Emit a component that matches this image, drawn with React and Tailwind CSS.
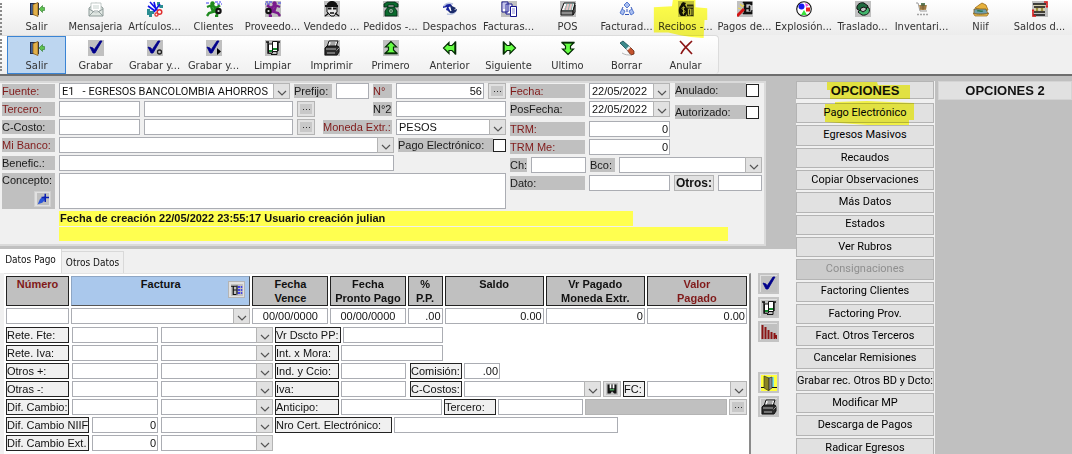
import { useState } from "react";
import clsx from "clsx";

/* ---------- icons ---------- */

const Svg = ({ gray, children, size = "size-4" }) => (
  <svg viewBox="0 0 16 16" className={clsx(size, "shrink-0")} fill="none" aria-hidden="true">
    {gray && <rect width="16" height="16" fill="#c0c0c0" />}
    {children}
  </svg>
);

const ExitIcon = () => (
  <Svg>
    <path d="M1 2h9v12H1z" fill="#1f2a4d" />
    <path d="M2 3h2v10H2z" fill="#3f5f96" />
    <path d="M4 3.500l5-2v14l-5-2z" fill="#e2b04a" stroke="#7a5512" strokeWidth=".7" />
    <path d="M15.500 6.500h-2V4.500L10 8l3.500 3.500v-2h2z" fill="#5fc24f" stroke="#2c7a2a" strokeWidth=".6" />
  </Svg>
);

const MailIcon = () => (
  <Svg>
    <path d="M1 7l7-5 7 5v8H1z" fill="#dfe6e2" stroke="#8d9a98" />
    <path d="M3 2h10v7l-5 3-5-3z" fill="#fff" stroke="#a9b4b2" strokeWidth=".7" />
    <path d="M5 5h6M5 7h6" stroke="#b9c6c2" strokeWidth=".8" />
    <path d="M1 15l5-5h4l5 5M1 8l5 3M15 8l-5 3" stroke="#8d9a98" strokeWidth=".9" />
  </Svg>
);

const ToolsIcon = () => (
  <Svg>
    <path d="M0 8h3v2h4v3H5v3H2v-2H0zM10 1h3v3h3v3h-3l-3-3z" fill="#2b8d92" />
    <path d="M3 1l8 9M7 1l2 8M1 5l7 5M13 3l-6 8" stroke="#1010e8" strokeWidth="1.600" />
    <circle cx="12.500" cy="11" r="2.300" stroke="#e03030" strokeWidth="1.500" />
    <circle cx="9.500" cy="13.500" r="1.600" stroke="#e03030" strokeWidth="1.300" />
  </Svg>
);

const RunnerIcon = ({ color, flip }) => (
  <Svg gray={flip}>
    <g transform={flip ? "translate(16 0) scale(-1 1)" : undefined}>
      <path d="M0 2h4M9 1h6M11 3h5" stroke="#3b3bf0" strokeWidth="1" strokeDasharray="3 1" />
      <circle cx="6.500" cy="2.500" r="2.200" fill={color} />
      <path d="M1 6l5-2 4 3 3-2-1-1M5 5l2 6-4 1-2 3M7 9l4 3v3H9M8 5l1 5" stroke={color} strokeWidth="2.400" />
      <circle cx="12.500" cy="10" r="3.200" fill="#111" />
      <circle cx="12.500" cy="10" r="1.100" fill="#ddd" />
    </g>
  </Svg>
);

const SellerIcon = () => (
  <Svg gray>
    <path d="M3 5c0-6 10-6 10 0v6l-3 4H7l-4-4z" fill="#e8e8e8" stroke="#111" />
    <path d="M3 4c1-5 9-5 10 0z" fill="#111" />
    <path d="M1 5h13M4 7.500h3.500M9 7.500h3.500" stroke="#111" strokeWidth="2" />
    <path d="M6 12h4M1 15l4-3M15 15l-4-3" stroke="#111" strokeWidth="1.300" />
  </Svg>
);

const PhoneIcon = () => (
  <Svg gray>
    <path d="M1 6V3l3-2h8l3 2v3h-4V4H5v2z" fill="#0a6b2d" stroke="#021" strokeWidth=".8" />
    <path d="M5 6h6l3 4v5H2v-5z" fill="#0a6b2d" stroke="#021" strokeWidth=".8" />
    <circle cx="8" cy="10" r="2.400" fill="#9fd0ac" stroke="#021" strokeWidth=".8" />
    <circle cx="8" cy="10" r=".8" fill="#021" />
  </Svg>
);

const ShipIcon = () => (
  <Svg>
    <path d="M1 7c0-3 4-5 8-4l1 2-3 1 2 5-5-2 1-3z" fill="#16219e" />
    <path d="M2 5c2-3 6-3 9-2M14 10c-2 3-6 4-9 3" stroke="#b9c3e0" strokeWidth="1.400" />
    <path d="M15 8c0 3-4 5-7 4l-2-2 3-1-1-5 6 3-2 2z" fill="#1b2b6b" />
    <path d="M7 6l2 4" stroke="#fff" strokeWidth="1.200" />
  </Svg>
);

const InvoicesIcon = () => (
  <Svg gray>
    <path d="M1 1h6v10H1zM5 3h6v10H5z" fill="#fff" stroke="#14148c" />
    <path d="M9.500 5.500h6v10h-6z" fill="#fff" stroke="#14148c" />
    <path d="M2 3h3M2 5h3M2 7h3M6 5h3M6 7h3M6 9h3M11 8h3M11 10h3M11 12h3" stroke="#6d6dc9" strokeWidth=".8" />
  </Svg>
);

const PosIcon = () => (
  <Svg gray>
    <path d="M4 2h11l-2 8H1z" fill="#f7f7f7" stroke="#111" />
    <path d="M6 4h7M5 6h7M4 8h8" stroke="#e08f8f" />
    <path d="M7 2l-2 8M10 2L8 10M13 2l-2 8" stroke="#4aa6a0" strokeWidth=".6" />
    <path d="M1 10h12v4H1zM13 10l2-6v7l-2 3z" fill="#8c8c8c" stroke="#111" strokeWidth=".9" />
  </Svg>
);

const EInvoiceIcon = () => (
  <Svg>
    <path d="M8 1l3 3-3 3-3-3zM3 8l3 2-2 4-3-2zM13 8l2 4-3 2-2-4z" fill="#a9bff0" stroke="#4a6ecb" strokeWidth=".9" />
    <path d="M6 13.500h4M8 8v3M4 6l-1 2M12 6l1 2" stroke="#3455b8" />
  </Svg>
);

const MoneyIcon = () => (
  <Svg gray>
    <path d="M3 3l2-2 3 1-1 2c3 2 3 10 0 11H3C0 13 0 6 3 4z" fill="#111" />
    <path d="M7 7c-1-1-3-1-3 .500S7 9 7 10.500 5 12.500 4 11.500M5.500 5.500v8" stroke="#c0c0c0" strokeWidth=".9" />
    <path d="M9 3.500h6.500V15H9z" fill="#2c2c2c" />
    <path d="M9 6h6M10.500 8h2v6h-2zM14 8v6M9 2h6" stroke="#c0c0c0" strokeWidth=".9" />
  </Svg>
);

const PaymentsIcon = () => (
  <Svg gray>
    <path d="M6 1h9v3h-1l-1-1H9v4h3V5h1v5h-1V8H9v3h5l1-2v4H6v-1h1V2H6z" fill="#111" stroke="#111" strokeWidth=".6" />
    <path d="M0 15l7-7" stroke="#d41414" strokeWidth="3" />
    <path d="M3 3l2 2M7 4l-2 2M1 7l3 1" stroke="#e9d64d" strokeWidth="1.200" />
  </Svg>
);

const ExplosionIcon = () => (
  <Svg>
    <circle cx="8" cy="8" r="7.300" fill="#fff" stroke="#111" strokeWidth="1.100" />
    <circle cx="5.500" cy="5.500" r="3" fill="#1919f0" />
    <path d="M10 6.500h4v4h-4z" fill="#ee2222" />
    <path d="M8 9l3 5H5z" fill="#3ae23a" />
    <path d="M9 2l4 2-3 2z" fill="#ef4fe4" />
  </Svg>
);

const TransferIcon = () => (
  <Svg gray>
    <path d="M2 8C1 3 6 1 9 2l4 3-1 3-3-2-3 1-1 3z" fill="#1f6a3f" stroke="#111" />
    <path d="M14 7c2 5-3 8-7 7L3 11l2-2 3 2 3-2 1-3z" fill="#43b56d" stroke="#111" />
  </Svg>
);

const CartIcon = () => (
  <Svg>
    <path d="M2 2h2l2 8h7" stroke="#9b9b9b" />
    <path d="M5 4h8l-1 5H6z" fill="#b7925a" />
    <path d="M7 2h4v3H7z" fill="#5b7f5d" />
    <path d="M6 5h6M6 7h6M9 3v6" stroke="#6b4d22" strokeWidth=".7" />
    <path d="M3 13.500h11" stroke="#a4a4a4" strokeWidth="1.500" strokeDasharray="2 1" />
  </Svg>
);

const NiifIcon = () => (
  <Svg>
    <path d="M2 7l4-3 3-2 4 2 2 5-3 1z" fill="#e6b13c" stroke="#9b6a14" strokeWidth=".8" />
    <path d="M1 8h12l2 5H1z" fill="#6f9fae" stroke="#7c5a1b" strokeWidth=".8" />
    <path d="M0 12c4 2 10 2 16 0l-2 3H2z" fill="#efc454" stroke="#8c6318" strokeWidth=".7" />
    <path d="M4 10c2-1 4 1 6 0" stroke="#2d7a4e" strokeWidth="1.300" />
  </Svg>
);

const BalanceIcon = () => (
  <Svg gray>
    <path d="M2 3h11v9H2z" fill="#d8d2ae" />
    <path d="M1 3h13M2 6h11M2 11h11M1 14h12" stroke="#111" strokeWidth="1.300" />
    <path d="M4 7l2 3M6 7l-2 3M9 7l2 3M11 7L9 10" stroke="#8e8128" />
    <path d="M12 1h3v5M14 5l1 1 1-1M4 15H1V9M0 10l1-1 1 1" stroke="#dd1a1a" strokeWidth="1.500" />
  </Svg>
);

const Check = () => <path d="M2 7l3 1 1 2L12 1h2L7 13H5z" fill="#00008b" stroke="#00008b" strokeWidth=".8" />;

const SaveIcon = () => (
  <Svg gray>
    <Check />
  </Svg>
);

const SaveNewIcon = () => (
  <Svg gray>
    <g transform="translate(-1 0)">
      <Check />
    </g>
    <circle cx="12.500" cy="12" r="2" stroke="#222" strokeWidth="1.300" />
  </Svg>
);

const SaveNextIcon = () => (
  <Svg gray>
    <g transform="translate(-1 0)">
      <Check />
    </g>
    <path d="M11 8l4 3.500-4 3.500z" fill="#000" />
  </Svg>
);

const CleanIcon = () => (
  <Svg gray>
    <path d="M1 2h3M12 2h3M3 2v11h4M13 2v9" stroke="#111" strokeWidth="1.400" />
    <path d="M3.500 4h4v9h-4z" fill="#fff" stroke="#111" />
    <path d="M7.500 1.500h5v10h-5z" fill="#fff" stroke="#111" />
    <path d="M8 8h4v2H8zM4 10h3v2H4z" fill="#158a2e" />
    <path d="M6 14.500h6v-3" stroke="#111" />
  </Svg>
);

const PrintIcon = () => (
  <Svg gray>
    <path d="M5 1h9l-2 6H3z" fill="#f3f3f3" stroke="#111" />
    <path d="M6.500 3h5M6 5h5" stroke="#555" />
    <path d="M1 8l2-2h11l1 2v4l-2 3H1z" fill="#2c2c2c" stroke="#111" />
    <path d="M2 9h10M3 13h8" stroke="#b8b8b8" strokeWidth="1.200" />
    <path d="M12.500 10.500L15 8" stroke="#999" />
  </Svg>
);

// arrow with a flared tail and a bar; drawn pointing up and turned for the other directions
const MoveIcon = ({ turn = 0, gray }) => (
  <Svg gray={gray}>
    <g transform={`rotate(${turn} 8 8)`}>
      <path d="M8 1.500L2.500 7H5.500v3L2.500 13h11L10.500 10V7h3z" fill="#66ff44" stroke="#052d05" strokeWidth="1.200" />
      <path d="M1.500 13.500h13" stroke="#052d05" strokeWidth="1.600" />
    </g>
  </Svg>
);

const EraseIcon = () => (
  <Svg>
    <path d="M1 3l3-2 7 6-3 3z" fill="#3c8a8c" stroke="#174a50" strokeWidth=".8" />
    <path d="M8 10l3-3 4 4v3l-3 1z" fill="#c4532e" stroke="#5f2410" strokeWidth=".8" />
    <path d="M7 9l3-3 1.500 1.500-3 3z" fill="#ececec" />
    <path d="M3 13c3 2 6 2 9 2" stroke="#b5b5b5" />
  </Svg>
);

const VoidIcon = () => (
  <Svg>
    <path d="M2 1l12 13M14 1C10 5 5 9 3 14" stroke="#8b1414" strokeWidth="1.700" />
  </Svg>
);

const PinIcon = () => (
  <Svg gray size="size-3">
    <path d="M1 15l3-7 6-4 2 4-5 5z" fill="#2b55d8" />
    <path d="M11 1v11M6 6h10" stroke="#0a1fb0" strokeWidth="2" />
  </Svg>
);

const TreeIcon = () => (
  <Svg gray size="size-3">
    <path d="M0 3h7M3 3v11h4M3 8h4M8 2v12" stroke="#111" strokeWidth="1.600" />
    <path d="M9 4h6M9 8h6M9 12h6" stroke="#1a1af0" strokeWidth="2" strokeDasharray="3 1" />
  </Svg>
);

const DiskIcon = () => (
  <Svg gray size="size-3">
    <path d="M2 2h3v5h2V2h2v5h2V2h3v12h-3l-3-3-2 3H2z" fill="#111" />
    <path d="M5 8h6v2H5z" fill="#4aa35a" />
    <path d="M5 2h2v5H5zM9 2h2v5H9z" fill="#fff" />
  </Svg>
);

const BarsIcon = () => (
  <Svg gray>
    <path d="M1.500 1v14M4.500 3v12M7.500 6v9M10.500 8v7M13.500 9v6M15.500 11v4" stroke="#8b1414" strokeWidth="2" />
  </Svg>
);

const DoorIcon = () => (
  <Svg>
    <rect width="16" height="16" fill="#ffff3c" />
    <path d="M5 2h8v10H5z" fill="#7fe0e0" />
    <path d="M3 1l5 2v13l-5-3z" fill="#8a8420" stroke="#222" strokeWidth=".6" />
    <path d="M8 3l3-1v11l-3 2z" fill="#8a8a8a" stroke="#222" strokeWidth=".6" />
    <path d="M0 12.500h3M11 12.500h5" stroke="#111" />
  </Svg>
);

/* ---------- data ---------- */

const modules = [
  { label: "Salir", icon: <ExitIcon /> },
  { label: "Mensajeria", icon: <MailIcon /> },
  { label: "Artículos...", icon: <ToolsIcon /> },
  { label: "Clientes", icon: <RunnerIcon color="#1f8a1f" /> },
  { label: "Proveedo...", icon: <RunnerIcon color="#7a1a8c" flip /> },
  { label: "Vendedo ...", icon: <SellerIcon /> },
  { label: "Pedidos -...", icon: <PhoneIcon /> },
  { label: "Despachos", icon: <ShipIcon /> },
  { label: "Facturas...", icon: <InvoicesIcon /> },
  { label: "POS", icon: <PosIcon /> },
  { label: "Facturad...", icon: <EInvoiceIcon /> },
  { label: "Recibos -...", icon: <MoneyIcon />, marked: true },
  { label: "Pagos de...", icon: <PaymentsIcon /> },
  { label: "Explosión...", icon: <ExplosionIcon /> },
  { label: "Traslado...", icon: <TransferIcon /> },
  { label: "Inventari...", icon: <CartIcon /> },
  { label: "Niif", icon: <NiifIcon /> },
  { label: "Saldos d...", icon: <BalanceIcon /> },
];

const actions = [
  { label: "Salir", icon: <ExitIcon />, selected: true },
  { label: "Grabar", icon: <SaveIcon /> },
  { label: "Grabar y...", icon: <SaveNewIcon /> },
  { label: "Grabar y...", icon: <SaveNextIcon /> },
  { label: "Limpiar", icon: <CleanIcon /> },
  { label: "Imprimir", icon: <PrintIcon /> },
  { label: "Primero", icon: <MoveIcon gray /> },
  { label: "Anterior", icon: <MoveIcon turn={270} /> },
  { label: "Siguiente", icon: <MoveIcon turn={90} /> },
  { label: "Ultimo", icon: <MoveIcon turn={180} /> },
  { label: "Borrar", icon: <EraseIcon /> },
  { label: "Anular", icon: <VoidIcon /> },
];

const options = [
  { label: "Pago Electrónico", marked: true },
  { label: "Egresos Masivos" },
  { label: "Recaudos" },
  { label: "Copiar Observaciones" },
  { label: "Más Datos" },
  { label: "Estados" },
  { label: "Ver Rubros" },
  { label: "Consignaciones", disabled: true },
  { label: "Factoring Clientes" },
  { label: "Factoring Prov." },
  { label: "Fact. Otros Terceros" },
  { label: "Cancelar Remisiones" },
  { label: "Grabar rec. Otros BD y Dcto:" },
  { label: "Modificar MP" },
  { label: "Descarga de Pagos" },
  { label: "Radicar Egresos" },
];

const columns = [
  { label: "Número", width: "w-[63px]", red: true },
  { label: "Factura", width: "w-[179px]", blue: true },
  { label: "Fecha\nVence", width: "w-[76px]", value: "00/00/0000", align: "text-center" },
  { label: "Fecha\nPronto Pago", width: "w-[75px]", value: "00/00/0000", align: "text-center" },
  { label: "%\nP.P.", width: "w-[35px]", value: ".00", align: "text-right" },
  { label: "Saldo", width: "w-[99px]", value: "0.00", align: "text-right" },
  { label: "Vr Pagado\nMoneda Extr.", width: "w-[99px]", value: "0", align: "text-right" },
  { label: "Valor\nPagado", width: "w-[100px]", value: "0.00", align: "text-right", red: true },
];

/* ---------- controls ---------- */

const Label = ({ htmlFor, red, className, children }) => (
  <label
    htmlFor={htmlFor}
    className={clsx("h-[14px] shrink-0 bg-[#c0c0c0] leading-[14px] whitespace-nowrap", red ? "text-[#801a1a]" : "text-[#1a1a1a]", className)}
  >
    {children}
  </label>
);

const BoxLabel = ({ htmlFor, className, children }) => (
  <label
    htmlFor={htmlFor}
    className={clsx("h-4 shrink-0 border border-[#222] bg-[#f0f0f0] leading-[14px] whitespace-nowrap", className)}
  >
    {children}
  </label>
);

const Input = ({ className, ...props }) => (
  <input type="text" className={clsx("h-4 min-w-0 border border-[#abadb3] bg-white px-px leading-none outline-none", className)} {...props} />
);

const Select = ({ id, value, className, ...props }) => (
  <div className={clsx("relative h-4 min-w-0", className)}>
    <select id={id} className="block h-4 w-full appearance-none border border-[#abadb3] bg-white pr-4 pl-[2px] leading-none outline-none" {...props}>
      <option>{value}</option>
    </select>
    <span className="pointer-events-none absolute inset-y-0 right-0 flex w-[17px] items-center justify-center border border-[#b4b4b4] bg-[#e1e1e1]">
      <svg viewBox="0 0 10 6" className="mt-1 h-[6px] w-[10px]" fill="none">
        <path d="M1 1l4 4 4-4" stroke="#555" strokeWidth="1.200" />
      </svg>
    </span>
  </div>
);

const Dots = ({ label }) => (
  <button aria-label={label} className="flex h-4 w-[18px] shrink-0 items-center justify-center border border-[#b4b4b4] bg-[#e1e1e1]">
    <span className="flex h-[10px] w-3 items-center justify-center gap-[2px] bg-[#c8c8c8]">
      <i className="size-px bg-[#333]" />
      <i className="size-px bg-[#333]" />
      <i className="size-px bg-[#333]" />
    </span>
  </button>
);

const CheckBox = ({ id }) => (
  <input id={id} type="checkbox" className="size-[13px] shrink-0 appearance-none border border-[#222] bg-white checked:bg-[#222]" />
);

const ToolButton = ({ label, icon, selected, marked }) => (
  <button
    className={clsx(
      "relative flex h-[38px] w-[59px] shrink-0 flex-col items-center gap-[3px] whitespace-nowrap",
      selected && "border border-[#3a84d4] bg-[#bdd6f0]",
      selected ? "pt-[3px]" : "pt-1"
    )}
  >
    {icon}
    <span className="leading-[14px]">{label}</span>
    {marked && (
      <svg viewBox="0 0 60 42" className="pointer-events-none absolute top-[3px] -left-[5px] h-[38px] w-[60px] mix-blend-multiply">
        <path d="M21 0h25v8l13 1v13h-3l-1 20-14-1-12-2-13-3H0V8l20-1z" fill="#ffff4a" />
      </svg>
    )}
  </button>
);

const SideButton = ({ label, children }) => (
  <button aria-label={label} className="flex size-[21px] items-center justify-center border-2 border-[#c4c4c4] bg-[#e1e1e1]">
    {children}
  </button>
);

/* ---------- sections ---------- */

const Toolbars = () => (
  <header className="shrink-0 border-b-2 border-[#6e6e6e] bg-[#f0f0f0] font-['DejaVu_Sans_Condensed','DejaVu_Sans',sans-serif] text-[11px] text-[#333]">
    <div className="flex h-[35px] items-end bg-linear-to-b from-white to-[#ececec]">
      <div className="h-8 w-[7px] shrink-0 border-l-2 border-dotted border-[#8a8a8a]" />
      {modules.map((item) => (
        <ToolButton key={item.label} {...item} />
      ))}
    </div>
    <div className="flex h-[39px] w-[719px] items-center rounded-r border-t border-r border-[#dcdcdc] bg-linear-to-b from-white to-[#f0f0f0]">
      <div className="h-8 w-[7px] shrink-0 border-l-2 border-dotted border-[#8a8a8a]" />
      {actions.map((item, i) => (
        <ToolButton key={i} {...item} />
      ))}
    </div>
  </header>
);

const Voucher = () => (
  <form className="mt-[5px] mr-[30px] mb-[3px] border-2 border-l-0 border-[#dadada] bg-[#f0f0f0] pb-[3px] pl-[2px]" onSubmit={(e) => e.preventDefault()}>
    <div className="flex gap-1">
      <div className="flex flex-1 flex-col gap-[2px]">
        <div className="flex items-center gap-1">
          <Label htmlFor="fuente" red className="w-[53px]">Fuente:</Label>
          <Select id="fuente" value={"E1\u00a0\u00a0 - EGRESOS BANCOLOMBIA AHORROS"} className="flex-1 font-[Roboto,sans-serif]" />
          <Label htmlFor="prefijo" className="w-[38px]">Prefijo:</Label>
          <Input id="prefijo" className="w-[33px]" />
          <Label htmlFor="numero" red className="w-[19px]">N°</Label>
          <Input id="numero" className="w-[88px] text-right" defaultValue="56" />
          <Dots label="Buscar número" />
        </div>
        <div className="flex items-center gap-1">
          <Label htmlFor="tercero" red className="w-[53px]">Tercero:</Label>
          <Input id="tercero" className="w-[81px]" />
          <Input aria-label="Nombre del tercero" className="flex-1" />
          <Dots label="Buscar tercero" />
          <Label htmlFor="numero2" className="ml-[54px] w-[19px]">N°2</Label>
          <Input id="numero2" className="w-[110px]" />
        </div>
        <div className="flex items-center gap-1">
          <Label htmlFor="ccosto" className="w-[53px]">C-Costo:</Label>
          <Input id="ccosto" className="w-[81px]" />
          <Input aria-label="Nombre del centro de costo" className="flex-1" />
          <Dots label="Buscar centro de costo" />
          <Label htmlFor="moneda" red className="ml-[4px] w-[69px]">Moneda Extr.:</Label>
          <Select id="moneda" value="PESOS" className="w-[110px]" />
        </div>
        <div className="flex items-center gap-1">
          <Label htmlFor="banco" red className="w-[53px]">Mi Banco:</Label>
          <Select id="banco" value="" className="flex-1" />
          <div className="flex items-center">
            <Label htmlFor="pago" className="w-[95px]">Pago Electrónico:</Label>
            <CheckBox id="pago" />
          </div>
        </div>
        <div className="flex items-center gap-1">
          <Label htmlFor="benefic" className="w-[53px]">Benefic.:</Label>
          <Input id="benefic" className="mr-[112px] flex-1" />
        </div>
        <div className="flex gap-1">
          <div className="flex w-[53px] shrink-0 flex-col bg-[#c0c0c0]">
            <Label htmlFor="concepto">Concepto:</Label>
            <button aria-label="Fijar concepto" className="mt-1 mr-1 flex h-4 w-[17px] items-center justify-center self-end border border-[#d0d0d0] bg-[#e1e1e1]">
              <PinIcon />
            </button>
          </div>
          <textarea id="concepto" className="h-9 flex-1 resize-none border border-[#abadb3] bg-white outline-none" />
        </div>
      </div>

      <div className="flex w-[254px] flex-col gap-[2px] pr-[2px]">
        <div className="flex gap-[5px]">
          <div className="flex flex-col gap-[2px]">
            <div className="flex items-center gap-1">
              <Label htmlFor="fecha" red className="w-[75px]">Fecha:</Label>
              <Select id="fecha" value="22/05/2022" className="w-[81px]" />
            </div>
            <div className="flex items-center gap-1">
              <Label htmlFor="posfecha" className="w-[75px]">PosFecha:</Label>
              <Select id="posfecha" value="22/05/2022" className="w-[81px]" />
            </div>
          </div>
          <div className="flex flex-col gap-2">
            <div className="flex items-center">
              <Label htmlFor="anulado" className="w-[71px]">Anulado:</Label>
              <CheckBox id="anulado" />
            </div>
            <div className="flex items-center">
              <Label htmlFor="autorizado" className="w-[71px]">Autorizado:</Label>
              <CheckBox id="autorizado" />
            </div>
          </div>
        </div>
        <div className="flex items-center gap-1">
          <Label htmlFor="trm" red className="w-[75px]">TRM:</Label>
          <Input id="trm" className="w-[81px] text-right" defaultValue="0" />
        </div>
        <div className="flex items-center gap-1">
          <Label htmlFor="trmme" red className="w-[75px]">TRM Me:</Label>
          <Input id="trmme" className="w-[81px] text-right" defaultValue="0" />
        </div>
        <div className="flex items-center gap-1">
          <Label htmlFor="ch" className="w-[17px]">Ch:</Label>
          <Input id="ch" className="w-[55px]" />
          <Label htmlFor="bco" className="w-[25px]">Bco:</Label>
          <Select id="bco" value="" className="flex-1" />
        </div>
        <div className="flex items-center gap-1">
          <Label htmlFor="dato" className="w-[75px]">Dato:</Label>
          <Input id="dato" className="w-[81px]" />
          <button className="h-4 w-10 border border-[#b4b4b4] bg-[#e1e1e1] text-[12px] leading-[13px] font-bold">Otros:</button>
          <Input aria-label="Otros" className="flex-1" />
        </div>
      </div>
    </div>

    <div className="mt-[2px] mr-[36px] ml-[57px] flex flex-col gap-px">
      <p className="mr-[95px] h-[15px] bg-[#ffff50] pl-px leading-[15px] font-bold">
        Fecha de creación 22/05/2022 23:55:17 Usuario creación julian
      </p>
      <div className="h-[14px] bg-[#ffff50]" />
    </div>
  </form>
);

const InvoiceTable = () => (
  <table className="w-full table-fixed border-separate border-spacing-[2px]">
    <thead>
      <tr className="h-[30px]">
        {columns.map((col) => (
          <th
            key={col.label}
            className={clsx(
              "relative border p-0 align-top leading-[14px] font-bold whitespace-pre",
              col.width,
              col.blue ? "border-[#8ea6c4] border-r-[#555] border-b-[#555] bg-[#aac8ec]" : "border-[#222] bg-[#c0c0c0]",
              col.red && "text-[#801a1a]"
            )}
          >
            {col.label}
            {col.blue && (
              <button aria-label="Ver facturas" className="absolute top-1 right-1 flex size-[17px] items-center justify-center border border-[#b4b4b4] bg-[#e1e1e1]">
                <TreeIcon />
              </button>
            )}
          </th>
        ))}
      </tr>
    </thead>
    <tbody>
      <tr className="h-4">
        {columns.map((col) => (
          <td key={col.label} className="p-0">
            {col.blue ? (
              <Select aria-label={col.label} value="" />
            ) : (
              <Input aria-label={col.label} className={clsx("block w-full", col.align)} defaultValue={col.value} />
            )}
          </td>
        ))}
      </tr>
    </tbody>
  </table>
);

// label + value + account select, shared by every row of the detail grid
const Concept = ({ id, label, wide, value }) => (
  <div className="flex w-[267px] shrink-0 gap-[3px]">
    <BoxLabel htmlFor={id} className={wide ? "w-[83px]" : "w-[63px]"}>{label}</BoxLabel>
    <Input id={id} className="flex-1 text-right" defaultValue={value} />
    <Select aria-label={"Cuenta " + label} value="" className="w-[112px]" />
  </div>
);

const Details = () => (
  <div className="flex flex-col gap-[2px] px-[2px] pt-px">
    <div className="flex gap-[2px]">
      <Concept id="retefte" label="Rete. Fte:" />
      <BoxLabel htmlFor="dscto" className="w-[66px]">Vr Dscto PP:</BoxLabel>
      <Input id="dscto" className="w-[100px]" />
    </div>
    <div className="flex gap-[2px]">
      <Concept id="reteiva" label="Rete. Iva:" />
      <BoxLabel htmlFor="mora" className="w-[64px]">Int. x Mora:</BoxLabel>
      <Input id="mora" className="w-[102px]" />
    </div>
    <div className="flex gap-[2px]">
      <Concept id="otrosmas" label="Otros +:" />
      <BoxLabel htmlFor="ind" className="w-[64px]">Ind. y Ccio:</BoxLabel>
      <Input id="ind" className="mr-[2px] w-[65px]" />
      <BoxLabel htmlFor="comision" className="w-[52px]">Comisión:</BoxLabel>
      <Input id="comision" className="w-[36px] text-right" defaultValue=".00" />
    </div>
    <div className="flex gap-[2px]">
      <Concept id="otrasmenos" label="Otras -:" />
      <BoxLabel htmlFor="iva" className="w-[64px]">Iva:</BoxLabel>
      <Input id="iva" className="mr-[2px] w-[65px]" />
      <BoxLabel htmlFor="ccostos" className="w-[52px]">C-Costos:</BoxLabel>
      <Select id="ccostos" value="" className="flex-1" />
      <button aria-label="Guardar centro" className="flex h-4 w-[18px] items-center justify-center border border-[#b4b4b4] bg-[#e1e1e1]">
        <DiskIcon />
      </button>
      <BoxLabel htmlFor="fc" className="w-[22px]">FC:</BoxLabel>
      <Select id="fc" value="" className="w-[100px]" />
    </div>
    <div className="flex gap-[2px]">
      <Concept id="difcambio" label="Dif. Cambio:" />
      <BoxLabel htmlFor="anticipo" className="w-[64px]">Anticipo:</BoxLabel>
      <Input id="anticipo" className="w-[101px]" />
      <BoxLabel htmlFor="tercerod" className="w-[52px]">Tercero:</BoxLabel>
      <Input id="tercerod" className="w-[85px]" />
      <div className="flex-1 border border-[#b4b4b4] bg-[#c0c0c0]" />
      <Dots label="Buscar tercero del detalle" />
    </div>
    <div className="flex gap-[2px]">
      <Concept id="difniif" label="Dif. Cambio NIIF" wide value="0" />
      <BoxLabel htmlFor="cert" className="w-[117px]">Nro Cert. Electrónico:</BoxLabel>
      <Input id="cert" className="w-[224px]" />
    </div>
    <div className="flex">
      <Concept id="difext" label="Dif. Cambio Ext." wide value="0" />
    </div>
  </div>
);

const Payment = () => {
  const [tab, setTab] = useState("Datos Pago");

  return (
    <section className="flex flex-1 flex-col bg-[#f0f0f0]">
      <div className="flex h-6 items-end font-['DejaVu_Sans_Condensed','DejaVu_Sans',sans-serif] text-[10px]">
        {["Datos Pago", "Otros Datos"].map((name) => (
          <button
            key={name}
            onClick={() => setTab(name)}
            className={clsx(
              "w-[62px] border-r border-[#d9d9d9] whitespace-nowrap",
              tab === name ? "h-6 bg-white pb-1" : "h-[22px] border-t"
            )}
          >
            {name}
          </button>
        ))}
      </div>
      <div className="flex flex-1">
        <div className="ml-1 flex-1 border-t border-r-2 border-t-[#e3e3e3] border-r-[#8a8a8a] bg-white">
          <InvoiceTable />
          <Details />
        </div>
        <div className="mr-[17px] ml-[7px] flex flex-col gap-[3px]">
          <SideButton label="Aceptar"><SaveIcon /></SideButton>
          <SideButton label="Limpiar"><CleanIcon /></SideButton>
          <SideButton label="Gráfico"><BarsIcon /></SideButton>
          <div className="mt-[27px] flex flex-col gap-[3px]">
            <SideButton label="Salir"><DoorIcon /></SideButton>
            <SideButton label="Imprimir"><PrintIcon /></SideButton>
          </div>
        </div>
      </div>
    </section>
  );
};

const OptionButton = ({ label, disabled, marked }) => (
  <button
    disabled={disabled}
    className={clsx(
      "relative flex w-full items-center justify-center border border-[#b4b4b4] whitespace-nowrap",
      disabled ? "bg-[#cccccc] text-[#8f8f8f]" : "bg-[#e1e1e1] text-black"
    )}
  >
    {label}
    {marked && (
      <svg viewBox="0 0 90 25" className="pointer-events-none absolute -top-[3px] left-[27px] h-[25px] w-[90px] mix-blend-multiply">
        <path d="M11 1l32-1 47 2v17h-5v6H58L1 21V3h10z" fill="#ffff4a" />
      </svg>
    )}
  </button>
);

const Options = () => (
  <aside className="mt-[5px] flex w-[139px] shrink-0 flex-col gap-1 bg-[#f0f0f0] pr-px font-[Roboto,sans-serif]">
    <h2 className="relative h-[18px] shrink-0 border border-[#b4b4b4] bg-[#e1e1e1] text-center font-['Liberation_Sans',sans-serif] text-[13px] leading-[17px] font-bold">
      OPCIONES
      <svg viewBox="0 0 83 17" className="pointer-events-none absolute top-0 left-[30px] h-[17px] w-[83px] mix-blend-multiply">
        <path d="M0 0h50l1 3h32v14H3V8H0z" fill="#ffff4a" />
      </svg>
    </h2>
    <div className="grid h-[355px] shrink-0 auto-rows-fr grid-cols-1 gap-[2px]">
      {options.map((item) => (
        <OptionButton key={item.label} {...item} />
      ))}
    </div>
  </aside>
);

export default function App() {
  return (
    <div className="flex h-screen flex-col overflow-hidden bg-[#c0c0c0] font-['Liberation_Sans',Arial,sans-serif] text-[11px] text-[#111]">
      <Toolbars />
      <main className="flex min-h-0 flex-1">
        <div className="flex min-w-0 flex-1 flex-col">
          <Voucher />
          <Payment />
        </div>
        <Options />
        <aside className="mt-[5px] w-[137px] shrink-0 pl-[3px]">
          <h2 className="h-[19px] border border-[#d4d4d4] bg-[#e1e1e1] text-center text-[13px] leading-[17px] font-bold">OPCIONES 2</h2>
        </aside>
      </main>
    </div>
  );
}
